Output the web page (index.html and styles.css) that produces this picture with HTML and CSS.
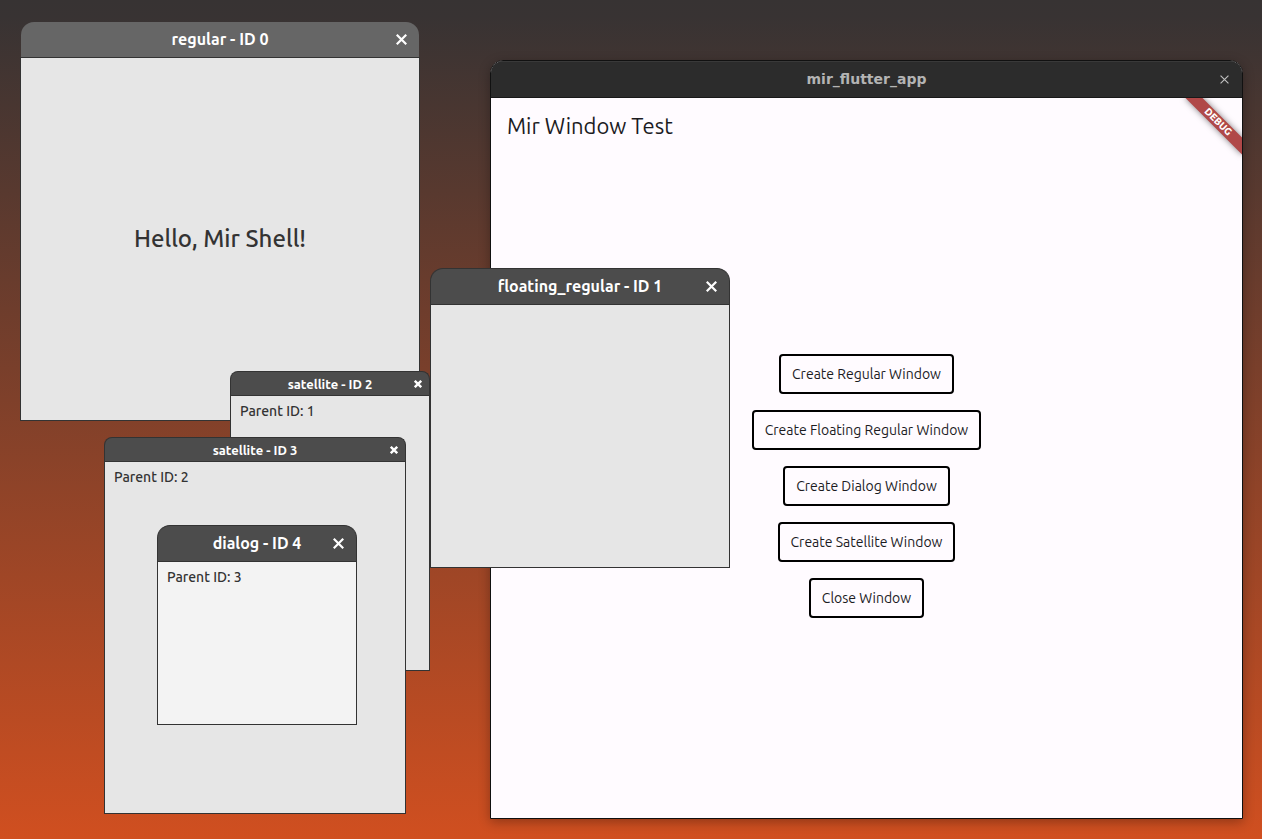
FILE: index.html
```html
<!DOCTYPE html>
<html lang="en">
<head>
<meta charset="utf-8">
<meta name="viewport" content="width=device-width, initial-scale=1">
<title>Mir Shell</title>
<link rel="stylesheet" href="styles.css">
</head>
<body>
<main class="desktop">

  <section class="app" aria-labelledby="app-title">
    <header class="app-bar">
      <h2 class="app-title" id="app-title">mir_flutter_app</h2>
      <button class="app-close" type="button" aria-label="Close">
        <svg viewBox="0 0 8 8"><path d="M0.5 0.5l7 7M7.5 0.5l-7 7"/></svg>
      </button>
    </header>
    <div class="app-body">
      <h1 class="app-heading">Mir Window Test</h1>
      <div class="actions">
        <button class="action" type="button">Create Regular Window</button>
        <button class="action" type="button">Create Floating Regular Window</button>
        <button class="action" type="button">Create Dialog Window</button>
        <button class="action" type="button">Create Satellite Window</button>
        <button class="action" type="button">Close Window</button>
      </div>
      <span class="debug">DEBUG</span>
    </div>
  </section>

  <section class="window window-regular" aria-labelledby="title-0">
    <header class="bar bar-light">
      <h2 class="title" id="title-0">regular - ID 0</h2>
      <button class="close" type="button" aria-label="Close">
        <svg viewBox="0 0 10 10"><path d="M0.7 0.7l8.6 8.6M9.3 0.7l-8.6 8.6"/></svg>
      </button>
    </header>
    <div class="content content-center"><p class="hello">Hello, Mir Shell!</p></div>
  </section>

  <section class="window window-satellite-2" aria-labelledby="title-2">
    <header class="bar bar-small">
      <h2 class="title" id="title-2">satellite - ID 2</h2>
      <button class="close" type="button" aria-label="Close">
        <svg viewBox="0 0 10 10"><path d="M1 1l8 8M9 1l-8 8"/></svg>
      </button>
    </header>
    <div class="content"><p class="parent">Parent ID: 1</p></div>
  </section>

  <section class="window window-satellite-3" aria-labelledby="title-3">
    <header class="bar bar-small">
      <h2 class="title" id="title-3">satellite - ID 3</h2>
      <button class="close" type="button" aria-label="Close">
        <svg viewBox="0 0 10 10"><path d="M1 1l8 8M9 1l-8 8"/></svg>
      </button>
    </header>
    <div class="content"><p class="parent">Parent ID: 2</p></div>
  </section>

  <section class="window window-floating" aria-labelledby="title-1">
    <header class="bar">
      <h2 class="title" id="title-1">floating_regular - ID 1</h2>
      <button class="close" type="button" aria-label="Close">
        <svg viewBox="0 0 10 10"><path d="M0.7 0.7l8.6 8.6M9.3 0.7l-8.6 8.6"/></svg>
      </button>
    </header>
    <div class="content"></div>
  </section>

  <section class="window window-dialog" aria-labelledby="title-4">
    <header class="bar">
      <h2 class="title" id="title-4">dialog - ID 4</h2>
      <button class="close" type="button" aria-label="Close">
        <svg viewBox="0 0 10 10"><path d="M0.7 0.7l8.6 8.6M9.3 0.7l-8.6 8.6"/></svg>
      </button>
    </header>
    <div class="content content-pale"><p class="parent">Parent ID: 3</p></div>
  </section>

</main>
</body>
</html>
```
FILE: styles.css
```css
* { box-sizing: border-box; }

body {
  margin: 0;
  font-family: Ubuntu, "Noto Sans", "Open Sans", sans-serif;
  color: #333;
}

h1, h2, p { margin: 0; }

button {
  font: inherit;
  padding: 0;
  border: 0;
  background: none;
  cursor: pointer;
}

svg {
  display: block;
  width: 100%;
  fill: none;
  stroke: currentColor;
}

.desktop {
  position: relative;
  min-height: 100vh;
  overflow: hidden;
  background: linear-gradient(#373333, #383333 2%, #d04f20);
}

/* Shell windows */
.window {
  position: absolute;
  display: flex;
  flex-direction: column;
}

.window-regular { left: 20px; top: 22px; width: 400px; height: 399px; }
.window-satellite-2 { left: 230px; top: 371px; width: 200px; height: 300px; }
.window-satellite-3 { left: 104px; top: 437px; width: 302px; height: 377px; }
.window-floating { left: 430px; top: 268px; width: 300px; height: 300px; }
.window-dialog { left: 157px; top: 525px; width: 200px; height: 200px; }

.bar {
  display: grid;
  grid-template-columns: 1fr auto 1fr;
  align-items: center;
  height: 36px;
  padding: 0 12px;
  border: 1px solid #333;
  border-bottom: 0;
  border-radius: 13px 13px 0 0;
  background: #4c4c4c;
  color: #fff;
  font-size: 16px;
}

.bar-light {
  height: 35px;
  margin: 0 1px;
  border: 0;
  background: #666;
}

.bar-small {
  height: 24px;
  padding: 0 7px;
  border-radius: 8px 8px 0 0;
  font-size: 13px;
}

.title {
  grid-column: 2;
  padding-bottom: 2px;
  font-size: inherit;
  font-weight: 700;
  line-height: 1;
  white-space: nowrap;
}

.bar-small .title { padding: 2px 0 0; }

.close {
  justify-self: end;
  width: 11px;
  color: #fff;
  stroke-width: 2;
}

.bar-small .close { width: 8px; stroke-width: 3; }

.content {
  flex: 1;
  padding: 6px 9px;
  border: 1px solid #333;
  background: #e6e6e6;
}

.content-pale { background: #f3f3f3; }

.content-center {
  display: flex;
  align-items: center;
  justify-content: center;
}

.hello { font-size: 24px; font-weight: 500; line-height: 32px; }
.parent { font-size: 14px; font-weight: 500; line-height: 18px; }

/* Application window */
.app {
  position: absolute;
  inset: 60px 19px 20px 490px;
  display: flex;
  flex-direction: column;
  overflow: hidden;
  border: 1px solid #111;
  border-radius: 13px 13px 0 0;
  background: #fffbff;
  box-shadow: 0 3px 12px rgba(0, 0, 0, 0.3);
}

.app-bar {
  display: grid;
  grid-template-columns: 1fr auto 1fr;
  align-items: center;
  height: 37px;
  padding: 0 13px;
  border-bottom: 1px solid #181818;
  background: #2c2c2c;
  box-shadow: inset 0 1px #393939;
  color: #b4b4b4;
}

.app-title {
  grid-column: 2;
  padding-bottom: 1px;
  font: 700 14px "DejaVu Sans", sans-serif;
}

.app-close {
  justify-self: end;
  width: 9px;
  color: #c0c0c0;
  stroke-width: 1;
}

.app-body {
  position: relative;
  flex: 1;
  display: flex;
  flex-direction: column;
  overflow: hidden;
  color: #1c1b1f;
}

.app-heading {
  padding: 12px 16px;
  font-size: 22px;
  font-weight: 400;
  line-height: 32px;
}

.actions {
  flex: 1;
  display: flex;
  flex-direction: column;
  align-items: center;
  justify-content: center;
  gap: 16px;
  padding-bottom: 56px;
  margin-top: 56px;
}

.action {
  height: 40px;
  padding: 0 11px;
  border: 2px solid #000;
  border-radius: 4px;
  color: #1c1b1f;
  font-size: 14px;
}

/* Corner ribbon over the app content */
.debug {
  position: absolute;
  top: 18px;
  right: -16px;
  width: 80px;
  background: #b04848;
  box-shadow: 0 0 6px rgba(0, 0, 0, 0.5);
  color: #fff;
  font-size: 10px;
  font-weight: 900;
  line-height: 12px;
  text-align: center;
  transform: rotate(45deg);
}
```
